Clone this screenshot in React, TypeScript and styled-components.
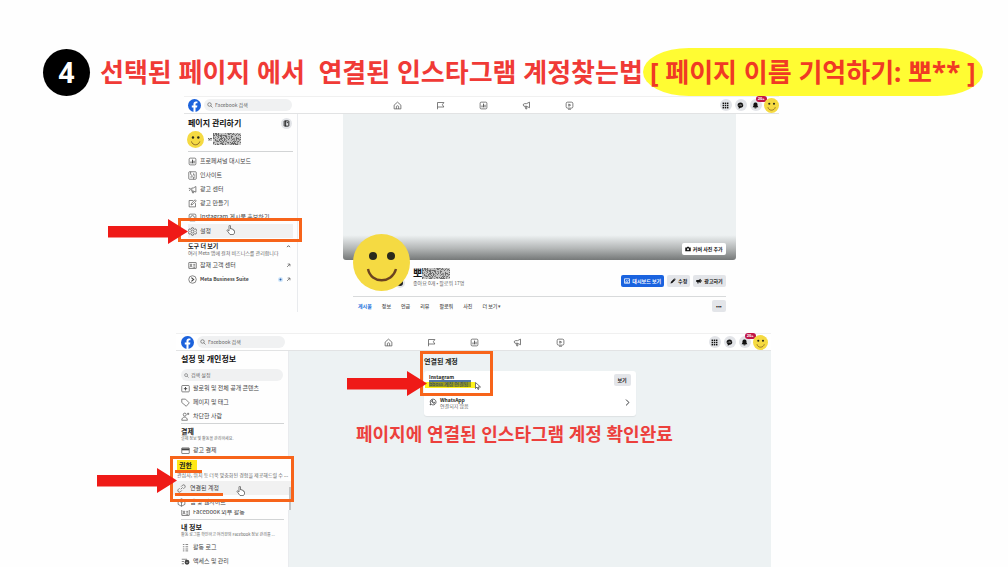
import React from "react";
import styled, { createGlobalStyle } from "styled-components";

const Global = createGlobalStyle`
  *, *::before, *::after { box-sizing: border-box; }
  body { margin: 0; background: #fefefe; color: #1c1e21;
    font-family: "Noto Sans CJK KR", "Noto Sans", sans-serif; overflow: hidden; }
  h1, h2, h3, p, ul { margin: 0; padding: 0; }
  ul { list-style: none; }
  button, input { font-family: inherit; }
  svg { display: block; flex: none; }
`;

const ORANGE = "#f7641a";
const FB_BLUE = "#1b62dc";
const HEADLINE_FONT = `"Noto Sans", "Noto Sans CJK KR", sans-serif`;

const Page = styled.main`
  padding: 48px 0 0;
  height: 100vh;
  overflow: hidden;
`;
const StepHeader = styled.header`
  display: flex;
  align-items: center;
  height: 48px;
  padding-left: 43px;
  white-space: nowrap;
`;
const StepNumber = styled.span`
  width: 47px;
  height: 47px;
  margin-right: 10px;
  border-radius: 50%;
  background: #000;
  color: #fff;
  font: 700 28px/46px ${HEADLINE_FONT};
  text-align: center;
`;
const StepTitle = styled.h1`
  display: flex;
  align-items: center;
  font-family: ${HEADLINE_FONT};
  font-size: 26px;
  line-height: 48px;
  font-weight: 700;
  color: #f03a36;
  white-space: pre;
`;
const Mark = styled.mark`
  padding: 0 7px;
  background: #fffc33;
  color: #f03a24;
  border-radius: 46px / 24px;
`;

const Shot = styled.section<{ $left: number; $top: number }>`
  position: relative;
  width: 59%;
  margin-left: ${(p) => p.$left}px;
  margin-top: ${(p) => p.$top}px;
`;
const NavBar = styled.nav<{ $inset?: boolean }>`
  display: grid;
  grid-template-columns: 1fr auto 1fr;
  align-items: center;
  height: 18px;
  padding: ${(p) => (p.$inset ? "0 3px 0 5px" : "0 0 0 4px")};
  background: #fff;
  border-top: 1px solid #f0f0f0;
  border-bottom: 1px solid #e2e3e4;
`;
const NavLeft = styled.div`
  display: flex;
  align-items: center;
  gap: 3px;
`;
const NavTabs = styled.div`
  display: flex;
  gap: 33px;
`;
const NavRight = styled.div`
  display: flex;
  align-items: center;
  justify-content: flex-end;
  gap: 3px;
`;
const IconButton = styled.button<{ $size?: number; $fill?: string }>`
  display: flex;
  align-items: center;
  justify-content: center;
  position: relative;
  width: ${(p) => p.$size ?? 12}px;
  height: ${(p) => p.$size ?? 12}px;
  padding: 0;
  border: 0;
  border-radius: 50%;
  background: ${(p) => p.$fill ?? "#e2e4e8"};
  color: #111;
`;
const TabButton = styled(IconButton)`
  color: #555;
`;
const AvatarButton = styled(IconButton)`
  margin-left: -1px;
`;
const Count = styled.span`
  position: absolute;
  top: -3px;
  left: 6px;
  padding: 0 2px;
  border-radius: 4px;
  background: #c01546;
  color: #fff;
  font: 700 4px/6px "Noto Sans", sans-serif;
`;
const SearchBox = styled.label<{ $wide?: boolean }>`
  display: flex;
  align-items: center;
  gap: 2px;
  width: ${(p) => (p.$wide ? 102 : 88)}px;
  height: 12px;
  padding-left: 3px;
  border-radius: 6px;
  background: #f0f1f2;
  color: #555;
`;
const SearchInput = styled.input`
  width: 100%;
  min-width: 0;
  padding: 0;
  border: 0;
  outline: 0;
  background: none;
  font-size: 5px;
  line-height: 8px;
  &::placeholder { color: #666; opacity: 1; }
`;

const Body = styled.div<{ $fill?: string }>`
  display: flex;
  background: ${(p) => p.$fill ?? "none"};
`;
const Sidebar = styled.aside<{ $inset?: boolean }>`
  flex: none;
  width: ${(p) => (p.$inset ? 113 : 114)}px;
  padding: ${(p) => (p.$inset ? "2px 4px 0 5px" : "3px 4px 0")};
  border-right: 1px solid #e9ebee;
  background: #fefefe;
`;
const TitleRow = styled.div`
  display: flex;
  align-items: center;
  justify-content: space-between;
  height: 12px;
  padding-right: 1px;
`;
const SideTitle = styled.h2`
  font-size: 8px;
  line-height: 12px;
  font-weight: 700;
  color: #111;
  white-space: nowrap;
`;
const ProfileRow = styled.div`
  display: flex;
  align-items: center;
  gap: 4px;
  height: 18px;
  margin: 1px 0 3px -1px;
`;
const MaskedName = styled.span`
  display: flex;
  align-items: center;
  gap: 1px;
`;
const Rule = styled.hr`
  height: 1px;
  margin: 0;
  border: 0;
  background: #d2d4d5;
`;
const Menu = styled.ul<{ $top?: number }>`
  padding-top: ${(p) => p.$top ?? 0}px;
`;
const Block = styled.div<{ $top: number }>`
  padding-top: ${(p) => p.$top}px;
`;
const MenuLink = styled.a<{ $on?: boolean; $latin?: boolean; $slim?: boolean }>`
  display: flex;
  align-items: center;
  gap: 3px;
  height: ${(p) => (p.$slim ? 8 : 14)}px;
  padding-right: 2px;
  background: ${(p) => (p.$on ? "#f1f1f1" : "none")};
  color: #444;
  font-size: ${(p) => (p.$latin ? 5 : 6)}px;
  font-weight: ${(p) => (p.$latin ? 700 : 400)};
  line-height: 8px;
  white-space: nowrap;
  text-decoration: none;
`;
const Grow = styled.span`
  flex: 1;
`;
const Group = styled.h3<{ $size: number }>`
  display: flex;
  justify-content: space-between;
  align-items: center;
  padding-right: 2px;
  font-size: ${(p) => p.$size}px;
  line-height: 8px;
  font-weight: 700;
  color: #222;
`;
const Note = styled.p<{ $size?: number }>`
  font-size: ${(p) => p.$size ?? 4}px;
  line-height: 6px;
  color: #666;
  white-space: nowrap;
`;

const Profile = styled.div`
  flex: 1;
  min-width: 0;
  padding: 0 43px 0 45px;
`;
const Cover = styled.div`
  display: flex;
  align-items: flex-end;
  justify-content: flex-end;
  height: 146px;
  padding: 0 10px 5px;
  border-radius: 0 0 3px 3px;
  background: linear-gradient(#edf1f2 0 83%, #b4b7b7 92%, #757878 100%);
`;
const SmallButton = styled.button<{ $tone?: "primary" | "light" }>`
  display: flex;
  align-items: center;
  justify-content: center;
  gap: 2px;
  height: 12px;
  padding: 0 3px;
  border: 0;
  border-radius: 2px;
  background: ${(p) => (p.$tone === "primary" ? "#1a63df" : p.$tone === "light" ? "#fff" : "#e3e5e9")};
  color: ${(p) => (p.$tone === "primary" ? "#fff" : "#151515")};
  font-size: 5px;
  line-height: 12px;
  font-weight: 700;
  white-space: nowrap;
`;
const WideButton = styled(SmallButton)`
  padding: 0 4px;
`;
const ProfileHead = styled.div`
  display: flex;
  align-items: flex-start;
  height: 37px;
  margin: 0 10px;
  border-bottom: 1px solid #d8dadb;
`;
const BigAvatar = styled.div`
  position: relative;
  width: 57px;
  height: 57px;
  margin: -26px 3px 0 0;
`;
const CameraDot = styled.span`
  position: absolute;
  right: 5px;
  bottom: 3px;
  width: 10px;
  height: 10px;
  border: 2px solid #e3e5e9;
  border-radius: 50%;
  background: #222;
`;
const Layer = styled.div`
  position: relative;
`;
const NameBlock = styled.div`
  padding-top: 6px;
`;
const Name = styled.h2`
  display: flex;
  align-items: center;
  font-size: 10px;
  line-height: 14px;
  color: #111;
`;
const ButtonRow = styled.div`
  display: flex;
  gap: 3px;
  margin-left: auto;
  padding-top: 15px;
`;
const TabRow = styled.div`
  display: flex;
  align-items: center;
  gap: 10px;
  margin: 3px 10px 0;
  padding-left: 5px;
`;
const TabLink = styled.a<{ $on?: boolean }>`
  color: ${(p) => (p.$on ? "#1b6fdc" : "#555")};
  font-size: 5px;
  line-height: 12px;
  font-weight: ${(p) => (p.$on ? 700 : 500)};
  text-decoration: none;
  white-space: nowrap;
`;

const Excerpt = styled.div`
  position: relative;
  width: 120px;
  height: 53px;
  margin: 0 0 -2px -10px;
  padding: 3px 0 0 2px;
  background: #fefefe;
  &::after {
    content: "";
    position: absolute;
    right: 0;
    top: 30px;
    bottom: 0;
    width: 2px;
    background: #c4c4c4;
  }
  ${MenuLink} { padding-left: 4px; gap: 4px; }
`;
const Indent = styled.div`
  padding-left: 4px;
`;
const Highlight = styled.span`
  padding: 1px 5px 1px 2px;
  background: #ffe714;
  font-size: 7px;
  line-height: 8px;
`;

const Settings = styled.div`
  flex: 1;
  min-width: 0;
  padding: 5px 135px 0;
`;
const SectionTitle = styled.h2`
  font-size: 7px;
  line-height: 10px;
  font-weight: 700;
`;
const Card = styled.div`
  margin-top: 5px;
  padding: 2px 5px 6px;
  border-radius: 3px;
  background: #fff;
  box-shadow: 0 1px 1px #dde1e3;
`;
const AccountRow = styled.div`
  display: flex;
  align-items: center;
  gap: 3px;
  height: 14px;
  margin-bottom: 7px;
  &:last-child { margin: 0; height: 16px; }
`;
const AccountName = styled.p`
  font-size: 5px;
  line-height: 7px;
  font-weight: 700;
`;
const AccountText = styled.div`
  flex: 1;
`;
const Selected = styled.span`
  display: block;
  width: 50px;
  height: 8px;
  margin-left: -4px;
  padding-left: 4px;
  background: linear-gradient(#fff 0 25%, #fff21c 25%);
  font-size: 5px;
  line-height: 7px;
  white-space: nowrap;
`;
const Selection = styled.span`
  display: block;
  width: 42px;
  height: 7px;
  background: linear-gradient(#5277a4 0 25%, #9a9c1c 25%);
  color: #27406d;
`;
const Caption = styled.p`
  margin: 4px 0 0 -68px;
  font-family: ${HEADLINE_FONT};
  font-size: 18px;
  line-height: 28px;
  font-weight: 700;
  color: #ec403c;
  white-space: nowrap;
`;

const Frame = styled.div<{ $x: number; $y: number; $w: number; $h: number }>`
  position: absolute;
  left: ${(p) => p.$x}px;
  top: ${(p) => p.$y}px;
  width: ${(p) => p.$w}px;
  height: ${(p) => p.$h}px;
  border: 3px solid ${ORANGE};
`;
const Pin = styled.div<{ $x: number; $y: number }>`
  position: absolute;
  left: ${(p) => p.$x}px;
  top: ${(p) => p.$y}px;
`;
const Underline = styled(Pin)<{ $w: number }>`
  width: ${(p) => p.$w}px;
  height: 3px;
  background: ${ORANGE};
`;

const ArrowMark = () => (
  <svg width="80" height="25" viewBox="0 0 80 25" aria-hidden="true">
    <path d="M0 7H60V0L80 12.500L60 25V18.500H0Z" fill="#ef1a17" />
  </svg>
);

const Smiley = ({ size }: { size: number }) => (
  <svg width={size} height={size} viewBox="0 0 57 57" aria-hidden="true">
    <circle cx="28.500" cy="28.500" r="28.500" fill="#f5da42" />
    <circle cx="20" cy="22" r="4" fill="#2a2a1c" />
    <circle cx="38" cy="22" r="4" fill="#2a2a1c" />
    <path d="M15 35C18 50 39 50 43 35" fill="none" stroke="#6b4320" strokeWidth="2.400" />
  </svg>
);

const FacebookLogo = () => (
  <svg width="13" height="13" viewBox="0 0 24 24" aria-hidden="true">
    <circle cx="12" cy="12" r="12" fill={FB_BLUE} />
    <path d="M16.700 15.500l.6-3.500h-3.400V9.700c0-1 .5-1.900 2-1.900h1.500v-3s-1.400-.2-2.700-.2c-2.800 0-4.600 1.700-4.600 4.700V12H7v3.500h3.100V24h3.800v-8.500z" fill="#fff" />
  </svg>
);

const paths: Record<string, React.ReactNode> = {
  home: <><path d="M3 11L12 3l9 8v10H3z" /><path d="M9 21v-6c0-3 6-3 6 0v6" /></>,
  flag: <path d="M4 22V4h17l-4 6 4 6H4" />,
  chart: <><rect x="3" y="3" width="18" height="18" rx="3" /><path d="M8 17v-5M12 17V7M16 17v-7" strokeWidth="2.500" /></>,
  horn: <><path d="M20 3v15l-8-4H7c-5 0-5-7 0-7h5z" /><path d="M8 14l2 7h3l-1-7" /></>,
  ads: <><path d="M21 4v15l-7-3h-4V8h4z" /><path d="M11 16l1 5h3v-4M2 9h4v4l-3 3" /></>,
  play: <><rect x="3" y="3" width="18" height="16" rx="4" /><path d="M10 8v6l5-3zM8 22h8" /></>,
  search: <><circle cx="10" cy="10" r="7" /><path d="M15 15l7 7" /></>,
  edit: <><path d="M20 11v10H3V4h11" /><path d="M8 16l2-5 9-9 3 3-9 9z" /></>,
  insta: <><rect x="3" y="3" width="18" height="18" rx="3" /><circle cx="12" cy="12" r="5" /></>,
  gear: <><circle cx="12" cy="12" r="4" /><path d="M10 2h4l1 3 3 1 3-1 2 4-2 3 2 3-2 4-3-1-3 1-1 3h-4l-1-3-3-1-3 1-2-4 2-3-2-3 2-4 3 1 3-1z" /></>,
  id: <><rect x="2" y="4" width="20" height="16" rx="1" /><circle cx="8" cy="10" r="2" /><path d="M5 17c0-5 6-5 6 0M14 9h5M14 13h5M14 17h5" /></>,
  insight: <><rect x="2" y="2" width="20" height="20" rx="2" /><path d="M7 2v7l4 3v5M15 6v5h4M6 16h4M15 22v-6h4" /></>,
  suite: <><circle cx="12" cy="12" r="10" /><path d="M9 7l6 5-6 5" strokeWidth="3" /></>,
  plus: <><rect x="2" y="4" width="20" height="17" rx="2" /><path d="M12 8v9M7.500 12.500h9" strokeWidth="2.500" /></>,
  tag: <path d="M2 3h10l10 10-8 9L2 12z" />,
  user: <><circle cx="10" cy="7" r="4" /><path d="M2 22c0-11 15-11 15 0zM16 5h6M19 2v6" /></>,
  card: <><rect x="2" y="5" width="20" height="15" rx="1" /><path d="M2 9h20" strokeWidth="5" /></>,
  link: <><path d="M10 14l5-5M11 7l4-4c4-3 9 2 6 6l-4 4M13 17l-4 4c-4 3-9-2-6-6l4-4" /></>,
  cube: <path d="M12 2l9 5v10l-9 5-9-5V7zM3 7l9 5 9-5M12 12v10" />,
  list: <path d="M5 4h4M12 4h7M5 10h4M12 10h7M5 16h4M12 16h7M5 21h4M12 21h7" />,
  access: <><path d="M2 6h14M2 12h6M2 18h6" /><circle cx="16" cy="14" r="4" strokeWidth="5" /></>,
  out: <path d="M5 19L18 6M8 5h11v11" strokeWidth="3" />,
  up: <path d="M5 15l7-7 7 7" strokeWidth="3.500" />,
  right: <path d="M7 2l10 10L7 22" />,
  whats: <><path d="M3 21l2-5C-1 4 15-1 20 8c4 9-5 16-13 11z" /><path d="M8 8c0 4 4 8 8 8l1-3-3-1-1 1-3-3 1-1-1-3z" /></>,
  book: <><rect x="4" y="3" width="16" height="18" rx="2" strokeWidth="3" /><path d="M9 3v18M13 9h4" strokeWidth="3" /></>,
};
const Icon = ({ name, size = 9, stroke = 1.7 }: { name: string; size?: number; stroke?: number }) => (
  <svg width={size} height={size} viewBox="0 0 24 24" fill="none" stroke="currentColor" strokeWidth={stroke} aria-hidden="true">
    {paths[name]}
  </svg>
);

const solids: Record<string, React.ReactNode> = {
  grid: [2, 9.5, 17].map((y) => [2, 9.5, 17].map((x) => <rect key={`${x}-${y}`} x={x} y={y} width="5" height="5" />)),
  chat: <><path d="M12 2c12 0 13 18 0 18l-6 3v-5C-2 12 3 2 12 2z" /><path d="M6 13l4-4 4 3 4-3" stroke="#fff" strokeWidth="2" fill="none" /></>,
  bell: <path d="M12 2c8 0 7 8 7 11l3 5H2l3-5c0-3-1-11 7-11zM8 19h8c0 4-8 4-8 0z" />,
  camera: <><path d="M1 6h6l2-3h6l2 3h6v15H1z" /><circle cx="12" cy="13" r="4" fill="#fff" /></>,
  pencil: <path d="M2 22l2-7L16 3l5 5L9 20zM17 2l2-1 4 4-1 2z" />,
  mega: <path d="M1 8h9l9-5v17l-9-4v6H6l-1-6H1zM20 8l3 2v3l-3 2z" />,
  board: <><path d="M2 3h20v18H2z" fill="none" stroke="currentColor" strokeWidth="3" /><path d="M6 17l4-7 4 4 4-6M6 18h12" stroke="currentColor" strokeWidth="2.500" fill="none" /></>,
};
const Solid = ({ name, size = 7 }: { name: string; size?: number }) => (
  <svg width={size} height={size} viewBox="0 0 24 24" fill="currentColor" aria-hidden="true">
    {solids[name]}
  </svg>
);

const Hand = () => (
  <svg width="9" height="10" viewBox="0 0 18 20" fill="#fff" stroke="#555" strokeWidth="1.500" aria-hidden="true">
    <path d="M6 12V2c0-2 3-2 3 0v6c0-1 3-1 3 0v1c0-1 3-1 3 1v1c0-1 2-1 2 1v4l-2 3H8l-6-8c0-2 2-2 4 1z" />
  </svg>
);
const Pointer = () => (
  <svg width="6" height="8" viewBox="0 0 12 16" fill="#fff" stroke="#444" strokeWidth="1.500" aria-hidden="true">
    <path d="M1 1v12l3-3 2 5 2-1-2-4h5z" />
  </svg>
);

/* Scrambled blocks that hide an account name. */
const Mosaic = ({ cols, rows }: { cols: number; rows: number }) => (
  <svg width={cols} height={rows} viewBox={`0 0 ${cols} ${rows}`} aria-hidden="true">
    <rect width={cols} height={rows} fill="#c4c4c4" />
    {Array.from({ length: cols * rows }, (_, i) => {
      const v = (i * 7919 + ((i * i) % 97) * 31) % 11;
      return v < 5 ? (
        <rect key={i} x={i % cols} y={Math.floor(i / cols)} width="1" height="1" fill={v < 3 ? "#6a6a6a" : "#8d8d8d"} />
      ) : null;
    })}
  </svg>
);

const TopNav = ({ inset }: { inset?: boolean }) => (
  <NavBar aria-label="Facebook" $inset={inset}>
    <NavLeft>
      <FacebookLogo />
      <SearchBox>
        <Icon name="search" size={6} stroke={2.5} />
        <SearchInput placeholder="Facebook 검색" aria-label="Facebook 검색" />
      </SearchBox>
    </NavLeft>
    <NavTabs>
      {["home", "flag", "chart", "horn", "play"].map((n) => (
        <TabButton key={n} $size={10} $fill="none" aria-label={n}>
          <Icon name={n} size={9} stroke={2} />
        </TabButton>
      ))}
    </NavTabs>
    <NavRight>
      <IconButton aria-label="menu"><Solid name="grid" /></IconButton>
      <IconButton aria-label="chat"><Solid name="chat" /></IconButton>
      <IconButton aria-label="alerts"><Solid name="bell" /><Count>20+</Count></IconButton>
      <AvatarButton $size={15} $fill="none" aria-label="profile"><Smiley size={15} /></AvatarButton>
    </NavRight>
  </NavBar>
);

const Item = ({ icon, label, on, latin, slim, children }: {
  icon: string; label: string; on?: boolean; latin?: boolean; slim?: boolean; children?: React.ReactNode;
}) => (
  <li>
    <MenuLink href="#" $on={on} $latin={latin} $slim={slim}>
      <Icon name={icon} />
      {label}
      <Grow />
      {children}
    </MenuLink>
  </li>
);

const PageShot = () => (
  <Shot $left={184} $top={0}>
    <TopNav />
    <Body>
      <Sidebar>
        <TitleRow>
          <SideTitle>페이지 관리하기</SideTitle>
          <IconButton $size={11} aria-label="book"><Icon name="book" size={7} /></IconButton>
        </TitleRow>
        <ProfileRow>
          <Smiley size={17} />
          <MaskedName>
            <Mosaic cols={4} rows={3} />
            <Mosaic cols={28} rows={12} />
          </MaskedName>
        </ProfileRow>
        <Rule />
        <Menu $top={2}>
          <Item icon="chart" label="프로페셔널 대시보드" />
          <Item icon="insight" label="인사이트" />
          <Item icon="ads" label="광고 센터" />
          <Item icon="edit" label="광고 만들기" />
          <Item icon="insta" label="Instagram 게시물 홍보하기" />
          <Item icon="gear" label="설정" on />
        </Menu>
        <Block $top={4}>
          <Group $size={6}>도구 더 보기<Icon name="up" size={5} /></Group>
          <Note $size={5}>여러 Meta 앱에 걸쳐 비즈니스를 관리합니다</Note>
        </Block>
        <Menu $top={2}>
          <Item icon="id" label="잠재 고객 센터"><Icon name="out" size={5} /></Item>
          <Item icon="suite" label="Meta Business Suite" latin>
            <IconButton as="span" $size={5} $fill="#cfe6fb">
              <svg width="3" height="3" viewBox="0 0 3 3" aria-hidden="true"><circle cx="1.500" cy="1.500" r="1" fill="#2a5fa8" /></svg>
            </IconButton>
            <Icon name="out" size={5} />
          </Item>
        </Menu>
      </Sidebar>
      <Profile>
        <Cover>
          <SmallButton $tone="light"><Solid name="camera" size={6} />커버 사진 추가</SmallButton>
        </Cover>
        <ProfileHead>
          <BigAvatar>
            <CameraDot />
            <Layer><Smiley size={57} /></Layer>
          </BigAvatar>
          <NameBlock>
            <Name>뽀<Mosaic cols={28} rows={11} /></Name>
            <Note $size={5}>좋아요 0개 • 팔로워 17명</Note>
          </NameBlock>
          <ButtonRow>
            <SmallButton $tone="primary"><Solid name="board" size={6} />대시보드 보기</SmallButton>
            <SmallButton><Solid name="pencil" size={6} />수정</SmallButton>
            <SmallButton><Solid name="mega" size={6} />광고하기</SmallButton>
          </ButtonRow>
        </ProfileHead>
        <TabRow>
          <TabLink href="#" $on>게시물</TabLink>
          {["정보", "언급", "리뷰", "팔로워", "사진", "더 보기 ▾"].map((t) => (
            <TabLink href="#" key={t}>{t}</TabLink>
          ))}
          <Grow />
          <WideButton aria-label="more">•••</WideButton>
        </TabRow>
      </Profile>
    </Body>
    <Frame $x={-6} $y={122} $w={124} $h={24} />
    <Pin $x={-76} $y={123}><ArrowMark /></Pin>
    <Pin $x={42} $y={129}><Hand /></Pin>
  </Shot>
);

const SettingsShot = () => (
  <Shot $left={176} $top={21}>
    <TopNav inset />
    <Body $fill="#edf2f3">
      <Sidebar $inset>
        <TitleRow><SideTitle>설정 및 개인정보</SideTitle></TitleRow>
        <Block $top={4}>
          <SearchBox $wide>
            <Icon name="search" size={5} stroke={2.5} />
            <SearchInput placeholder="검색 설정" aria-label="검색 설정" />
          </SearchBox>
        </Block>
        <Menu>
          <Item icon="plus" label="팔로워 및 전체 공개 콘텐츠" />
          <Item icon="tag" label="페이지 및 태그" />
          <Item icon="user" label="차단한 사람" />
        </Menu>
        <Rule />
        <Block $top={3}>
          <Group $size={7}>결제</Group>
          <Note>결제 정보 및 활동을 관리하세요.</Note>
        </Block>
        <Menu $top={2}><Item icon="card" label="광고 결제" /></Menu>
        <Excerpt>
          <Indent>
            <Group $size={7}><Highlight>권한</Highlight></Group>
            <Block $top={2}>
              <Note $size={5}>관심사, 위치 등 더욱 맞춤화된 경험을 제공해드릴 수 ...</Note>
            </Block>
          </Indent>
          <Menu $top={3}>
            <Item icon="link" label="연결된 계정" on />
            <Item icon="cube" label="앱 및 웹사이트" />
          </Menu>
        </Excerpt>
        <Menu><Item icon="id" label="Facebook 외부 활동" slim /></Menu>
        <Block $top={3}><Rule /></Block>
        <Block $top={3}>
          <Group $size={7}>내 정보</Group>
          <Note>활동 로그를 확인하고 여러분의 Facebook 정보 관리를 ...</Note>
        </Block>
        <Menu $top={3}>
          <Item icon="list" label="활동 로그" />
          <Item icon="access" label="액세스 및 관리" />
        </Menu>
      </Sidebar>
      <Settings>
        <SectionTitle>연결된 계정</SectionTitle>
        <Card>
          <AccountRow>
            <AccountText>
              <AccountName>Instagram</AccountName>
              <Selected><Selection>bboss 계정 연결됨</Selection></Selected>
            </AccountText>
            <WideButton>보기</WideButton>
          </AccountRow>
          <AccountRow>
            <Icon name="whats" size={8} stroke={2} />
            <AccountText>
              <AccountName>WhatsApp</AccountName>
              <Note $size={5}>연결되지 않음</Note>
            </AccountText>
            <Icon name="right" size={7} stroke={3} />
          </AccountRow>
        </Card>
        <Caption>페이지에 연결된 인스타그램 계정 확인완료</Caption>
      </Settings>
    </Body>
    <Underline $x={-1} $y={137} $w={27} />
    <Underline $x={-1} $y={160} $w={48} />
    <Frame $x={-6} $y={123} $w={124} $h={46} />
    <Pin $x={-79} $y={135}><ArrowMark /></Pin>
    <Pin $x={60} $y={153}><Hand /></Pin>
    <Frame $x={244} $y={18} $w={73} $h={45} />
    <Pin $x={171} $y={38}><ArrowMark /></Pin>
    <Pin $x={299} $y={49}><Pointer /></Pin>
  </Shot>
);

export default function App() {
  return (
    <>
      <Global />
      <Page>
        <StepHeader>
          <StepNumber>4</StepNumber>
          <StepTitle>{"선택된 페이지 에서  연결된 인스타그램 계정찾는법"}<Mark>[ 페이지 이름 기억하기: 뽀** ]</Mark></StepTitle>
        </StepHeader>
        <PageShot />
        <SettingsShot />
      </Page>
    </>
  );
}
